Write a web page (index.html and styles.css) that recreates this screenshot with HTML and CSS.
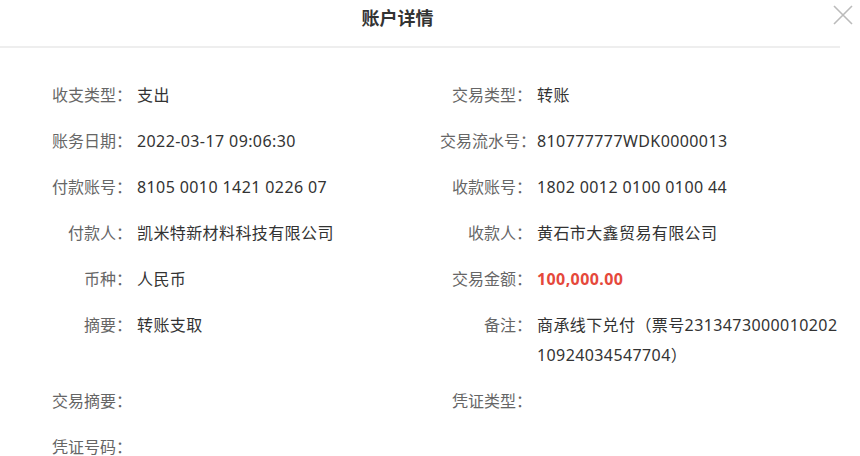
FILE: index.html
```html
<!doctype html>
<html>
<head>
<meta charset="utf-8">
<link rel="stylesheet" href="styles.css">
<title>账户详情</title>
</head>
<body>
<div class="dialog">
  <div class="dialog-head">
    <h1>账户详情</h1>
  </div>
  <a class="close" href="#" title="关闭">
    <svg width="20" height="20" viewBox="0 0 20 20"><path d="M1 1L19 19M19 1L1 19" stroke="#bbb" stroke-width="1.6" fill="none"/></svg>
  </a>

  <div class="detail">
    <div class="field"><span class="label">收支类型：</span><span class="value">支出</span></div>
    <div class="field"><span class="label">交易类型：</span><span class="value">转账</span></div>

    <div class="field"><span class="label">账务日期：</span><span class="value">2022-03-17 09:06:30</span></div>
    <div class="field"><span class="label">交易流水号：</span><span class="value">810777777WDK0000013</span></div>

    <div class="field"><span class="label">付款账号：</span><span class="value">8105 0010 1421 0226 07</span></div>
    <div class="field"><span class="label">收款账号：</span><span class="value">1802 0012 0100 0100 44</span></div>

    <div class="field"><span class="label">付款人：</span><span class="value">凯米特新材料科技有限公司</span></div>
    <div class="field"><span class="label">收款人：</span><span class="value">黄石市大鑫贸易有限公司</span></div>

    <div class="field"><span class="label">币种：</span><span class="value">人民币</span></div>
    <div class="field"><span class="label">交易金额：</span><span class="value amount">100,000.00</span></div>

    <div class="field"><span class="label">摘要：</span><span class="value">转账支取</span></div>
    <div class="field"><span class="label">备注：</span><span class="value wrap">商承线下兑付（票号231347300001020210924034547704）</span></div>

    <div class="field plain"><span class="label">交易摘要：</span><span class="value"></span></div>
    <div class="field plain"><span class="label">凭证类型：</span><span class="value"></span></div>

    <div class="field plain"><span class="label">凭证号码：</span><span class="value"></span></div>
  </div>
</div>
</body>
</html>
```

FILE: styles.css
```css
*{margin:0;padding:0;box-sizing:border-box;}
body {
	font:16px "Noto Sans","Noto Sans CJK SC",sans-serif;
	color:#333;
	background:#fff;
}
.dialog {
	position:relative;
	width:860px;
	height:456px;
	overflow:hidden;
}
.dialog-head {
	width:840px;
	height:48px;
	padding:0 45px 0 0;
	border-bottom:2px solid #eee;
	text-align:center;
}
.dialog-head h1 {
	font-size:18px;
	font-weight:bold;
	line-height:36px;
	color:#333;
}
.close {
	position:absolute;
	top:5px;
	left:833px;
	width:20px;
	height:20px;
}
.close svg{display:block;}
.detail {
	display:grid;
	grid-template-columns:400px 400px;
	row-gap:16px;
	padding:32px 0 0 40px;
}
.field {
	display:flex;
	line-height:30px;
}
.label {
	width:92px;
	flex:none;
	text-align:right;
	color:#666;
	white-space:nowrap;
}
.value {
	margin-left:5px;
	flex:1;
	color:#333;
	letter-spacing:0.4px;
}
.value.wrap {
	max-width:303px;
	word-break:break-all;
}
.amount {
	color:#e5483b;
	font-weight:bold;
}
.plain .label {
	width:auto;
	text-align:left;
	padding-left:12px;
}
```
